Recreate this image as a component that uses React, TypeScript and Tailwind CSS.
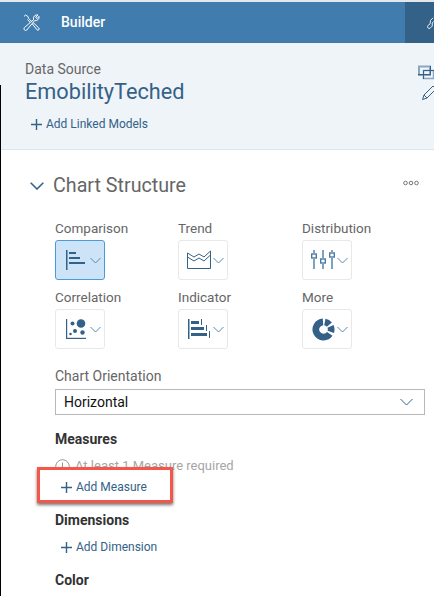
import React from 'react';

const Caret = () => (
  <svg width="11" height="7" viewBox="0 0 11 7" fill="none" stroke="#5b8ab0" strokeWidth="1" className="shrink-0">
    <path d="M0.5 1 L5.5 6 L10.5 1" />
  </svg>
);

const PlusIcon = () => (
  <svg width="11" height="11" viewBox="0 0 11 11" fill="none" stroke="#346187" strokeWidth="1.4" className="shrink-0">
    <path d="M5.5 0 V11 M0 5.5 H11" />
  </svg>
);

const ToolsIcon = () => (
  <svg width="17" height="17" viewBox="0 0 17 17" fill="none" stroke="currentColor" strokeWidth="1" className="shrink-0">
    <path d="M15 1 A3.6 3.6 0 0 0 10.6 5.6 L1.4 13.6 A1.7 1.7 0 0 0 3.8 16 L11.6 6.6 A3.6 3.6 0 0 0 16 2.4 L14 4.6 L12.6 3.4 Z" />
    <path d="M1 2.4 L2.6 1 L5 2.6 L5.6 4.4 L8.4 7.2 M4.4 5.6 L7 8.2" />
    <path d="M9.4 10 L10.6 9 L15.8 14 A1.2 1.2 0 0 1 14 15.8 Z" />
  </svg>
);

const BarIcon = () => (
  <svg width="20" height="20" viewBox="0 0 20 20" fill="#346187">
    <rect x="0" y="0" width="1.5" height="20" />
    <rect x="3" y="2" width="7" height="2" />
    <rect x="3" y="7" width="11" height="2" />
    <rect x="3" y="12" width="16" height="2" />
  </svg>
);

const TrendIcon = () => (
  <svg width="24" height="20" viewBox="0 0 24 20" fill="none" stroke="#346187" strokeWidth="1">
    <path d="M0.5 3 V18.5 H23.5 V1" />
    <path d="M0.5 3 L7 7 L12 4 L17 7 L23.5 1" />
    <path d="M0.5 7 L7 11 L12 8 L17 11 L23.5 5" />
  </svg>
);

const DistributionIcon = () => (
  <svg width="24" height="20" viewBox="0 0 24 20" fill="none" stroke="#4a7ba6" strokeWidth="1.4">
    <path d="M3 0 V3 M3 9 V19 M12 0 V8 M12 14 V19 M21 0 V2 M21 8 V19" />
    <rect x="0.7" y="4" width="4.6" height="4" />
    <rect x="9.7" y="9" width="4.6" height="4" />
    <rect x="18.7" y="3" width="4.6" height="4" />
  </svg>
);

const ScatterIcon = () => (
  <svg width="20" height="20" viewBox="0 0 20 20" fill="#346187">
    <rect x="0" y="0" width="1.2" height="20" />
    <rect x="0" y="18.8" width="20" height="1.2" />
    <circle cx="15" cy="4.5" r="4.3" />
    <circle cx="6.5" cy="4.5" r="2" />
    <circle cx="9" cy="12" r="2" />
    <circle cx="16.5" cy="13.5" r="2.2" />
    <circle cx="4.5" cy="15" r="1.3" />
  </svg>
);

const IndicatorIcon = () => (
  <svg width="22" height="20" viewBox="0 0 22 20" fill="#346187">
    <rect x="0" y="0" width="1.5" height="20" />
    <rect x="3" y="2" width="8" height="3" />
    <rect x="3" y="8" width="13" height="3" />
    <rect x="3" y="14" width="16" height="3" />
    <rect x="13" y="0" width="1" height="6" />
    <rect x="18" y="6" width="1" height="6" />
    <rect x="21" y="12" width="1" height="7" />
  </svg>
);

const DonutIcon = () => (
  <svg width="23" height="23" viewBox="0 0 24 24" fill="none" stroke="#346187" strokeWidth="7">
    <path d="M11.5 4 A8 8 0 1 0 18.55 16.6" />
    <path d="M13.4 4.1 A8 8 0 0 1 18.1 6.9" />
    <path d="M19.3 8.7 A8 8 0 0 1 19.6 14.5" />
  </svg>
);

const ChartButton = ({ label, icon, active }: { label: string; icon: React.ReactNode; active?: boolean }) => (
  <div className="flex flex-col">
    <span className="text-[13.5px] leading-[20px] text-[#666666]">{label}</span>
    <div
      className={`mt-[2px] flex h-[40px] w-[50px] items-center gap-[2px] rounded-[3px] border pl-[8px] ${
        active ? 'border-[#4a9bdc] bg-[#cde3f7]' : 'border-[#e8e8e8] bg-white'
      }`}
    >
      <div className="flex w-[24px] justify-center">{icon}</div>
      <Caret />
    </div>
  </div>
);

const AddLink = ({ label }: { label: string }) => (
  <div className="flex items-center gap-[4px] text-[12px] leading-[16px] text-[#346187]">
    <PlusIcon />
    <span>{label}</span>
  </div>
);

export default function App() {
  return (
    <div className="relative h-[596px] w-[434px] overflow-hidden bg-white font-['Roboto',sans-serif]">
      <div className="h-[2px] bg-[#e3e6ea]" />
      <div className="flex h-[41px] items-center justify-between bg-[#417cae] pl-[23px]">
        <div className="flex items-center gap-[21px] text-white">
          <ToolsIcon />
          <span className="text-[14px] font-medium">Builder</span>
        </div>
        <div className="flex h-full w-[29px] items-center bg-[#346187] pl-[22px] text-white">
          <svg width="8" height="14" viewBox="0 0 8 14" fill="none" stroke="currentColor" strokeWidth="1">
            <path d="M7 1 L4 4 L3.5 8 L1 10 A2 2 0 0 0 3.5 13 L6 10.5 L6 7 L8 5" />
          </svg>
        </div>
      </div>
      <div className="h-[107px] border-b border-[#dde5ec] bg-[#eff4f9] pl-[25px] pt-[17px]">
        <div className="flex flex-col">
          <span className="text-[14px] leading-[18px] text-[#666666]">Data Source</span>
          <span className="mt-[1px] text-[21.7px] leading-[26px] text-[#346187]">EmobilityTeched</span>
          <div className="mt-[11px] pl-[6px]">
            <AddLink label="Add Linked Models" />
          </div>
        </div>
      </div>

      <div className="pl-[30px] pr-[15px] pt-[23px]">
        <div className="flex items-center justify-between">
          <div className="flex items-center gap-[9px]">
            <svg width="14" height="8" viewBox="0 0 14 8" fill="none" stroke="#346187" strokeWidth="1.6">
              <path d="M0.7 0.8 L7 7 L13.3 0.8" />
            </svg>
            <span className="text-[19.7px] leading-[26px] text-[#666666]">Chart Structure</span>
          </div>
          <svg className="mb-[6px]" width="16" height="6" viewBox="0 0 16 6" fill="none" stroke="#777777">
            <circle cx="2.5" cy="3" r="1.8" />
            <circle cx="8" cy="3" r="1.8" />
            <circle cx="13.5" cy="3" r="1.8" />
          </svg>
        </div>

        <div className="mt-[19px] grid grid-cols-[123px_124px_auto] gap-y-[7px] pl-[25px]">
          <ChartButton label="Comparison" icon={<BarIcon />} active />
          <ChartButton label="Trend" icon={<TrendIcon />} />
          <ChartButton label="Distribution" icon={<DistributionIcon />} />
          <ChartButton label="Correlation" icon={<ScatterIcon />} />
          <ChartButton label="Indicator" icon={<IndicatorIcon />} />
          <ChartButton label="More" icon={<DonutIcon />} />
        </div>

        <div className="mt-[17px] pl-[25px]">
          <div className="text-[14px] leading-[20px] text-[#666666]">Chart Orientation</div>
          <div className="mt-[3px] flex h-[26px] w-[370px] items-center justify-between border border-[#b8b8b8] bg-white pl-[8px] pr-[11px] text-[14px] text-[#111111]">
            <span>Horizontal</span>
            <svg width="13" height="8" viewBox="0 0 13 8" fill="none" stroke="#346187" strokeWidth="1">
              <path d="M0.5 1 L6.5 7 L12.5 1" />
            </svg>
          </div>

          <div className="mt-[15px] text-[14px] font-bold leading-[18px] text-[#333333]">Measures</div>
          <div className="mt-[10px] flex items-center gap-[5px] text-[13px] leading-[16px] text-[#a6a6a6]">
            <svg width="15" height="15" viewBox="0 0 15 15" fill="none" stroke="#999999">
              <circle cx="7.5" cy="7.5" r="6.8" />
              <path d="M7.5 3.5 V8.5 M7.5 10 V11.5" />
            </svg>
            <span>At least 1 Measure required</span>
          </div>
          <div className="h-[21px]" />

          <div className="mt-[16px] text-[14px] font-bold leading-[18px] text-[#333333]">Dimensions</div>
          <div className="mt-[10px] pl-[6px]">
            <AddLink label="Add Dimension" />
          </div>
          <div className="mt-[16px] text-[14px] font-bold leading-[18px] text-[#333333]">Color</div>
        </div>
      </div>

      {/* red annotation round the button */}
      <div className="absolute left-[37px] top-[467px] flex h-[36px] w-[136px] items-center border-[3px] border-[#f5564a] bg-white pl-[21px] pt-[4px] shadow-[0_2px_3px_rgba(0,0,0,0.55)]">
        <AddLink label="Add Measure" />
      </div>

      {/* stray window edge down the left side */}
      <div className="absolute bottom-0 left-0 top-[85px] w-[1px] bg-black" />

      <div className="absolute left-[418px] top-[65px] flex flex-col gap-[5px]">
        <svg width="16" height="15" viewBox="0 0 16 15" fill="none" strokeWidth="1">
          <rect x="1" y="1.5" width="11" height="8.5" stroke="#8aa6c1" strokeWidth="2" />
          <rect x="5.5" y="5.5" width="10" height="8" stroke="#8aa6c1" strokeWidth="1.5" />
          <path d="M0 9.5 H12.5 V1 M5.5 14 V5.5 H16" stroke="#346187" />
        </svg>
        <svg className="ml-[3px]" width="16" height="16" viewBox="0 0 16 16" fill="none" stroke="#346187" strokeWidth="1">
          <path d="M3 10 L12 1 L15 4 L6 13 L1.5 14.5 Z M3 10 L6 13" />
        </svg>
      </div>
    </div>
  );
}
